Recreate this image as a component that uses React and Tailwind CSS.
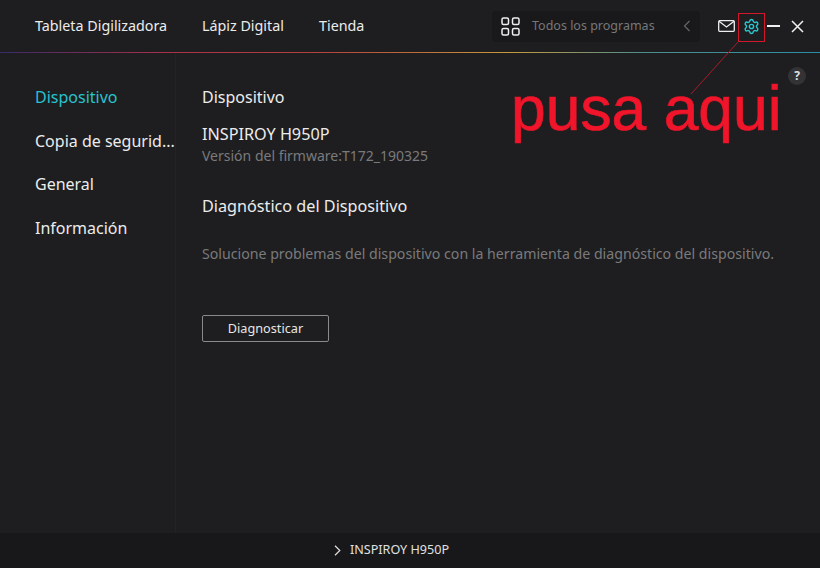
import React from 'react';
import { Settings } from 'lucide-react';

const SIDE_ITEMS = [
  { label: 'Dispositivo', active: true },
  { label: 'Copia de segurid...' },
  { label: 'General' },
  { label: 'Información' },
];

const App = () => {
  return (
    <div className="relative w-[820px] h-[568px] overflow-hidden flex flex-col bg-[#1e1e20] text-[#ececec] font-['Noto_Sans',sans-serif]">
      {/* Top bar */}
      <header className="h-[52px] shrink-0 flex items-center pl-[35px] text-[14.3px]">
        <span className="w-[167px]">Tableta Digilizadora</span>
        <span className="w-[117px]">Lápiz Digital</span>
        <span className="w-[173px]">Tienda</span>
        <div className="w-[208px] h-[31px] flex items-center bg-[#19191b] rounded-sm pl-[9px]">
          <svg width="19" height="19" viewBox="0 0 19 19" fill="none" stroke="#eeeeee" strokeWidth="1.5">
            <rect x="1" y="1" width="6.5" height="6.5" rx="1.5" />
            <rect x="11.5" y="1" width="6.5" height="6.5" rx="1.5" />
            <rect x="1" y="11.5" width="6.5" height="6.5" rx="1.5" />
            <rect x="11.5" y="11.5" width="6.5" height="6.5" rx="1.5" />
          </svg>
          <span className="ml-[12px] text-[12.5px] text-[#777779]">Todos los programas</span>
          <svg className="ml-[28px]" width="8" height="12" viewBox="0 0 8 12" fill="none" stroke="#666668" strokeWidth="1.2">
            <path d="M6.5 1 L1.5 6 L6.5 11" />
          </svg>
        </div>
        <svg className="ml-[18px]" width="17" height="12" viewBox="0 0 17 12" fill="none" stroke="#eeeeee" strokeWidth="1.3">
          <rect x="0.7" y="0.7" width="15.6" height="10.6" rx="1" />
          <path d="M1 1.2 L8.5 7 L16 1.2" />
        </svg>
        <Settings className="ml-[8px]" size={17} color="#2cc5d2" strokeWidth={2} />
        <div className="ml-[7px] w-[13px] h-[2px] bg-[#f0f0f0]" />
        <svg className="ml-[11px]" width="13" height="13" viewBox="0 0 13 13" fill="none" stroke="#f0f0f0" strokeWidth="1.5">
          <path d="M1 1 L12 12 M12 1 L1 12" />
        </svg>
      </header>

      {/* Gradient line */}
      <div className="h-[1px] shrink-0 bg-[linear-gradient(to_right,#3a2a6a_0%,#a8304a_20%,#b5453c_40%,#c79a3c_62%,#4f8f8a_78%,#2a8ea8_100%)]" />

      <div className="flex-1 flex min-h-0">
        {/* Sidebar */}
        <aside className="w-[176px] shrink-0 border-r border-[#232325] pt-[33px] pl-[35px] flex flex-col gap-[21.5px] text-[16px]">
          {SIDE_ITEMS.map(item => (
            <span key={item.label} className={`leading-[22px] whitespace-nowrap ${item.active ? 'text-[#27c3cf]' : 'text-[#ececec]'}`}>
              {item.label}
            </span>
          ))}
        </aside>

        {/* Content */}
        <main className="flex-1 pt-[33px] pl-[26px] flex flex-col items-start">
          <h2 className="text-[16px] leading-[22px]">Dispositivo</h2>
          <p className="mt-[15px] text-[16.2px] leading-[22px]">INSPIROY H950P</p>
          <p className="mt-[1px] text-[14px] leading-[20px] text-[#7a7a7c]">Versión del firmware:T172_190325</p>
          <h2 className="mt-[29px] text-[16.2px] leading-[22px]">Diagnóstico del Dispositivo</h2>
          <p className="mt-[27px] text-[14.17px] leading-[20px] text-[#7a7a7c] whitespace-nowrap">
            Solucione problemas del dispositivo con la herramienta de diagnóstico del dispositivo.
          </p>
          <button className="mt-[51px] w-[127px] h-[27px] border border-[#8a8a8c] rounded-[2px] text-[12.7px] text-[#e6e6e6] flex items-center justify-center">
            Diagnosticar
          </button>
        </main>
      </div>

      {/* Footer */}
      <footer className="h-[35px] shrink-0 bg-[#18181a] flex items-center justify-center pr-[37px] text-[12.6px] text-[#e0e0e0]">
        <svg className="mr-[9px]" width="7" height="11" viewBox="0 0 7 11" fill="none" stroke="#e0e0e0" strokeWidth="1.2">
          <path d="M1 0.8 L5.8 5.5 L1 10.2" />
        </svg>
        INSPIROY H950P
      </footer>

      {/* Help badge */}
      <div className="absolute left-[788px] top-[67px] w-[18px] h-[18px] rounded-full bg-[#333335] text-[#e0e0e0] text-[12px] font-bold flex items-center justify-center">?</div>

      {/* Annotation overlay */}
      <div className="absolute left-[738px] top-[13px] w-[27px] h-[29px] border border-[#d3172a]" />
      <svg className="absolute left-[690px] top-[41px]" width="50" height="54" viewBox="0 0 50 54" fill="none" stroke="#a81b2b" strokeWidth="1">
        <path d="M48 1 L1 53" />
      </svg>
      <span className="absolute left-[511px] top-[73px] text-[62.4px] leading-[72px] text-[#f0152a] [-webkit-text-stroke:0.7px_#f0152a] whitespace-nowrap font-['Liberation_Sans',sans-serif]">pusa aqui</span>
    </div>
  );
};

export default App;
